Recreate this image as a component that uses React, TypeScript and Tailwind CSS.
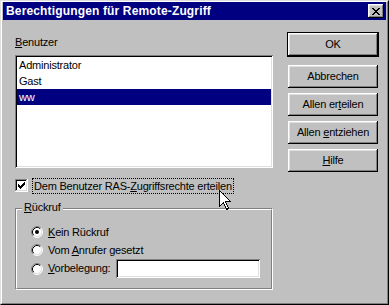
import React from "react";

const raised =
  "shadow-[inset_-1px_-1px_#000,inset_1px_1px_#fff,inset_-2px_-2px_#808080,inset_2px_2px_#dfdfdf]";
const sunken =
  "shadow-[inset_1px_1px_#808080,inset_-1px_-1px_#fff,inset_2px_2px_#000,inset_-2px_-2px_#dfdfdf]";

function Btn({ children, def }: { children: React.ReactNode; def?: boolean }) {
  const inner = (
    <div
      className={`w-[90px] h-[23px] bg-[#c0c0c0] flex items-center justify-center text-[11px] leading-[13px] text-black ${raised}`}
    >
      <span>{children}</span>
    </div>
  );
  if (def) return <div className="border border-black w-[92px]">{inner}</div>;
  return <div className="ml-[1px]">{inner}</div>;
}

function Radio({ checked }: { checked?: boolean }) {
  return (
    <svg width="12" height="12" viewBox="0 0 12 12" className="shrink-0">
      <circle cx="6" cy="6" r="5" fill="#fff" />
      <path d="M2.11 9.89 A5.5 5.5 0 0 1 9.89 2.11" stroke="#808080" strokeWidth="1" fill="none" />
      <path d="M9.89 2.11 A5.5 5.5 0 0 1 2.11 9.89" stroke="#fff" strokeWidth="1" fill="none" />
      <path d="M2.82 9.18 A4.5 4.5 0 0 1 9.18 2.82" stroke="#000" strokeWidth="1" fill="none" />
      <path d="M9.18 2.82 A4.5 4.5 0 0 1 2.82 9.18" stroke="#dfdfdf" strokeWidth="1" fill="none" />
      {checked && <circle cx="6" cy="6" r="2" fill="#000" />}
    </svg>
  );
}

function Check() {
  const cols = [2, 3, 4, 3, 2, 1, 0];
  return (
    <svg width="13" height="13" viewBox="0 0 13 13" shapeRendering="crispEdges">
      <rect x="0" y="0" width="13" height="13" fill="#fff" />
      <rect x="0" y="0" width="12" height="1" fill="#808080" />
      <rect x="0" y="0" width="1" height="12" fill="#808080" />
      <rect x="1" y="1" width="10" height="1" fill="#000" />
      <rect x="1" y="1" width="1" height="10" fill="#000" />
      <rect x="0" y="12" width="13" height="1" fill="#fff" />
      <rect x="12" y="0" width="1" height="13" fill="#fff" />
      <rect x="1" y="11" width="11" height="1" fill="#dfdfdf" />
      <rect x="11" y="1" width="1" height="11" fill="#dfdfdf" />
      {cols.map((y, i) => (
        <rect key={i} x={3 + i} y={3 + y} width="1" height="3" fill="#000" />
      ))}
    </svg>
  );
}

function CloseX() {
  const rows = [0, 1, 2, 3, 4, 5, 6];
  return (
    <svg width="8" height="7" viewBox="0 0 8 7" shapeRendering="crispEdges">
      {rows.map((i) => (
        <React.Fragment key={i}>
          <rect x={i} y={i} width="2" height="1" fill="#000" />
          <rect x={6 - i} y={i} width="2" height="1" fill="#000" />
        </React.Fragment>
      ))}
    </svg>
  );
}

function Cursor() {
  return (
    <svg
      width="13"
      height="21"
      viewBox="0 0 13 21"
      className="absolute left-[218px] top-[189px]"
      shapeRendering="crispEdges"
    >
      <path
        d="M0.5 0.5 L0.5 16.5 L4.5 12.5 L7.5 19.5 L9.5 18.5 L6.5 11.5 L11.5 11.5 Z"
        fill="#fff"
        stroke="#000"
        strokeWidth="1"
      />
    </svg>
  );
}

export default function App() {
  const font = { fontFamily: '"Liberation Sans", Arial, sans-serif' };
  return (
    <div
      className="relative w-[389px] h-[305px] bg-[#c0c0c0] border-t border-l border-t-[#dfdfdf] border-l-[#dfdfdf] border-r border-b border-r-black border-b-black text-black"
      style={font}
    >
      <div className="h-full border-t border-l border-t-white border-l-white border-r border-b border-r-[#808080] border-b-[#808080] px-[1px] pb-[1px] flex flex-col">
        {/* Title bar */}
        <div className="h-[18px] bg-[#000080] flex items-center justify-between pl-[3px] pr-[2px]">
          <span className="text-white font-bold text-[12px] leading-[14px] tracking-[0.15px]">
            Berechtigungen für Remote-Zugriff
          </span>
          <div className={`w-[16px] h-[14px] bg-[#c0c0c0] flex items-center justify-center ${raised}`}>
            <CloseX />
          </div>
        </div>

        {/* Body */}
        <div className="flex pl-[12px] text-[11px] leading-[13px] tracking-[-0.2px]">
          <div className="w-[258px] flex flex-col">
            <div className="mt-[16px] h-[13px]">
              <span className="underline">B</span>enutzer
            </div>
            <div className={`mt-[6px] h-[113px] bg-white p-[2px] ${sunken}`}>
              <div className="h-[16px] leading-[16px] pl-[2px]">Administrator</div>
              <div className="h-[16px] leading-[16px] pl-[2px]">Gast</div>
              <div className="h-[16px] leading-[16px] pl-[2px] bg-[#000080] text-white">ww</div>
            </div>
            <div className="mt-[10px] h-[16px] flex items-start">
              <div className="mt-[1px]">
                <Check />
              </div>
              <div className="ml-[4px] h-[16px] border border-dotted border-black px-[1px] leading-[14px]">
                Dem Benutzer RAS-<span className="underline">Z</span>ugriffsrechte erteilen
              </div>
            </div>
            <div className="relative mt-[14px] border border-t-[#808080] border-l-[#808080] border-r-white border-b-white">
              <div className="border border-t-white border-l-white border-r-[#808080] border-b-[#808080] pt-[13px] pb-[10px] pl-[14px]">
                <div className="h-[18px] flex items-center">
                  <Radio checked />
                  <span className="ml-[5px]">
                    <span className="underline">K</span>ein Rückruf
                  </span>
                </div>
                <div className="h-[18px] flex items-center">
                  <Radio />
                  <span className="ml-[5px]">
                    Vom <span className="underline">A</span>nrufer gesetzt
                  </span>
                </div>
                <div className="h-[19px] flex items-center">
                  <Radio />
                  <span className="ml-[5px] w-[68px]">
                    <span className="underline">V</span>orbelegung:
                  </span>
                  <div className={`w-[144px] h-[19px] bg-white ${sunken}`} />
                </div>
              </div>
              <div className="absolute left-[6px] top-[-8px] px-[2px] bg-[#c0c0c0] leading-[13px]">
                <span className="underline">R</span>ückruf
              </div>
            </div>
          </div>

          <div className="ml-[14px] mt-[12px] flex flex-col w-[92px]">
            <Btn def>OK</Btn>
            <div className="mt-[8px] flex flex-col gap-[5px]">
              <Btn>Abbrechen</Btn>
              <Btn>
                Allen er<span className="underline">t</span>eilen
              </Btn>
              <Btn>
                Allen <span className="underline">e</span>ntziehen
              </Btn>
              <Btn>
                <span className="underline">H</span>ilfe
              </Btn>
            </div>
          </div>
        </div>
      </div>
      <Cursor />
    </div>
  );
}
